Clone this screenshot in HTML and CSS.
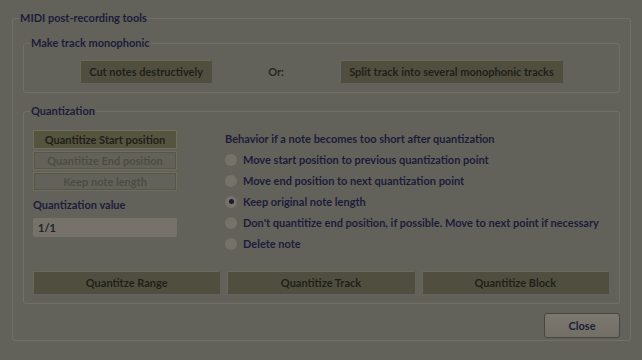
FILE: index.html
```html
<!DOCTYPE html>
<html lang="en">
<head>
  <meta charset="UTF-8">
  <title>MIDI post-recording tools</title>
  <link rel="stylesheet" href="styles.css">
</head>
<body>
  <fieldset class="group outer">
    <legend>MIDI post-recording tools</legend>
    <div class="outer-body">

      <!-- make track monophonic -->
      <fieldset class="group">
        <legend>Make track monophonic</legend>
        <div class="mono-row">
          <button class="btn">Cut notes destructively</button>
          <span class="or">Or:</span>
          <button class="btn">Split track into several monophonic tracks</button>
        </div>
      </fieldset>

      <!-- quantization -->
      <fieldset class="group quant">
        <legend>Quantization</legend>
        <div class="quant-inner">
          <div class="quant-body">
            <div class="quant-left">
              <button class="btn mode active">Quantitize Start position</button>
              <button class="btn mode">Quantitize End position</button>
              <button class="btn mode">Keep note length</button>
              <label class="value-label" for="qvalue">Quantization value</label>
              <input class="value-input" id="qvalue" type="text" value="1/1">
            </div>
            <div class="quant-right">
              <div class="behavior-title">Behavior if a note becomes too short after quantization</div>
              <label class="radio"><span class="dot"></span>Move start position to previous quantization point</label>
              <label class="radio"><span class="dot"></span>Move end position to next quantization point</label>
              <label class="radio"><span class="dot checked"></span>Keep original note length</label>
              <label class="radio"><span class="dot"></span>Don't quantitize end position, if possible. Move to next point if necessary</label>
              <label class="radio"><span class="dot"></span>Delete note</label>
            </div>
          </div>
          <div class="quant-actions">
            <button class="btn">Quantitze Range</button>
            <button class="btn">Quantitize Track</button>
            <button class="btn">Quantitize Block</button>
          </div>
        </div>
      </fieldset>

      <div class="footer">
        <button class="close">Close</button>
      </div>
    </div>
  </fieldset>
</body>
</html>
```

FILE: styles.css
```css
body {
  margin: 0;
  padding: 0 11px 0 12px;
  background-color: #63625a;
  font-family: Lato, "Liberation Sans", sans-serif;
  font-size: 11px;
  color: #1c1c38;
}

.group {
  margin: 0;
  padding: 0;
  border: 1px solid #717068;
  border-radius: 3px;
}

.group legend {
  padding: 0 1px;
  margin-left: 6px;
  line-height: 14px;
  font-weight: bold;
  color: #1c1c3a;
}

.outer {
  margin-top: 11px;
  height: 330px;
  box-sizing: border-box;
}

.outer-body {
  padding: 11px 10px 9px 10px;
}

.btn {
  box-sizing: border-box;
  font-family: inherit;
  font-size: 11px;
  font-weight: bold;
  color: #1f1f19;
  background-color: #504f3f;
  border: 1px solid #504f3f;
  border-top-color: #6a6957;
  border-left-color: #6a6957;
  height: 23px;
  padding: 0 8px;
}

.mono-row {
  display: flex;
  justify-content: space-evenly;
  align-items: center;
  padding: 10px 0 9px;
}

.or {
  font-weight: bold;
  color: #26261e;
}

.quant {
  margin-top: 11px;
}

.quant-inner {
  padding: 0 10px 9px 9px;
}

.quant-body {
  display: flex;
  gap: 48px;
  padding-top: 10px;
}

.quant-left {
  display: flex;
  flex-direction: column;
  gap: 2px;
  width: 144px;
  padding-top: 2px;
}

.btn.mode {
  flex: 0 0 19px;
  height: 19px;
  padding: 0;
  background-color: transparent;
  border-color: #6f6e5c;
  box-shadow: inset 0 0 0 1px #56564a;
  color: #4d4d43;
}

.btn.mode.active {
  background-color: #55543f;
  box-shadow: none;
  color: #1f1f19;
}

.value-label {
  margin-top: 5px;
  line-height: 14px;
  font-weight: bold;
  color: #1c1c3a;
}

.value-input {
  margin-top: 4px;
  width: 144px;
  height: 19px;
  box-sizing: border-box;
  border: none;
  border-radius: 2px;
  background-color: #767269;
  font-family: inherit;
  font-size: 11px;
  font-weight: bold;
  color: #22222a;
  padding: 0 5px;
}

.quant-right {
  display: flex;
  flex-direction: column;
}

.behavior-title {
  margin-top: 4px;
  line-height: 14px;
  font-weight: bold;
  padding-bottom: 3px;
}

.radio {
  display: flex;
  align-items: center;
  gap: 6px;
  height: 21px;
  font-weight: bold;
  color: #1c1c3a;
}

.dot {
  width: 12px;
  height: 12px;
  border-radius: 50%;
  background-color: #757268;
  display: flex;
  align-items: center;
  justify-content: center;
}

.dot.checked::after {
  content: "";
  width: 5px;
  height: 5px;
  border-radius: 50%;
  background-color: #1c1c30;
}

.quant-actions {
  display: grid;
  grid-template-columns: 1fr 1fr 1fr;
  gap: 7px;
  margin-top: 17px;
}

.footer {
  display: flex;
  justify-content: flex-end;
  margin-top: 9px;
}

.close {
  width: 76px;
  height: 25px;
  font-family: inherit;
  font-size: 11px;
  font-weight: bold;
  color: #1e1e3c;
  background: linear-gradient(#7c786f, #736f67);
  border: 1px solid #48473f;
  border-radius: 3px;
}
```
